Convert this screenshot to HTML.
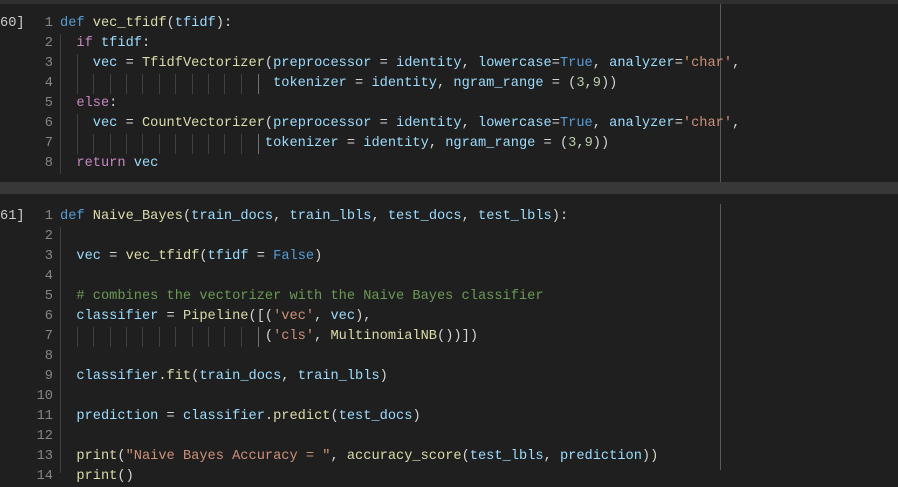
<!DOCTYPE html>
<html><head><meta charset="utf-8"><style>
html,body{margin:0;padding:0}
body{width:898px;height:470px;background:#1f1f1f;position:relative;overflow:hidden;font-family:"Liberation Mono",monospace;font-size:13.67px;color:#d4d4d4}
.w{position:absolute;left:0;top:3px;width:898px;height:470px}
.l{position:absolute;left:60px;height:20px;line-height:20px;white-space:pre}
.n{position:absolute;left:20px;width:33px;text-align:right;height:20px;line-height:20px;color:#858585}
.lab{position:absolute;left:0;height:20px;line-height:20px;color:#cccccc}
.g{position:absolute;width:1px;background:#404040}
.k{color:#569cd6}.f{color:#dcdcaa}.p{color:#9cdcfe}.c{color:#c586c0}.s{color:#ce9178}.m{color:#6a9955}.d{color:#b5cea8}.y{color:#d4d4d4}.v{color:#d4d4d4}
</style></head><body>
<div style="position:absolute;left:0;top:0;width:898px;height:4px;background:#2f2f2f"></div>
<div style="position:absolute;left:0;top:182px;width:898px;height:12px;background:#383838"></div>
<div style="position:absolute;left:720px;top:4px;width:1px;height:178px;background:#5a5a5a"></div>
<div style="position:absolute;left:720px;top:204px;width:1px;height:266px;background:#5a5a5a"></div>
<div class="w">
<!-- cell 1 -->
<div class="lab" style="top:11px">60]</div>
<div class="g" style="left:60px;top:31px;height:140px"></div>
<div class="g" style="left:77px;top:51px;height:40px"></div>
<div class="g" style="left:77px;top:111px;height:40px"></div>
<div class="g" style="left:93px;top:71px;height:20px"></div><div class="g" style="left:110px;top:71px;height:20px"></div><div class="g" style="left:126px;top:71px;height:20px"></div><div class="g" style="left:142px;top:71px;height:20px"></div><div class="g" style="left:159px;top:71px;height:20px"></div><div class="g" style="left:175px;top:71px;height:20px"></div><div class="g" style="left:192px;top:71px;height:20px"></div><div class="g" style="left:208px;top:71px;height:20px"></div><div class="g" style="left:224px;top:71px;height:20px"></div><div class="g" style="left:241px;top:71px;height:20px"></div><div class="g" style="left:258px;top:71px;height:20px;background:#707070"></div>
<div class="g" style="left:93px;top:131px;height:20px"></div><div class="g" style="left:110px;top:131px;height:20px"></div><div class="g" style="left:126px;top:131px;height:20px"></div><div class="g" style="left:142px;top:131px;height:20px"></div><div class="g" style="left:159px;top:131px;height:20px"></div><div class="g" style="left:175px;top:131px;height:20px"></div><div class="g" style="left:192px;top:131px;height:20px"></div><div class="g" style="left:208px;top:131px;height:20px"></div><div class="g" style="left:224px;top:131px;height:20px"></div><div class="g" style="left:241px;top:131px;height:20px"></div><div class="g" style="left:258px;top:131px;height:20px;background:#707070"></div>

<div class="n" style="top:11px">1</div><div class="l" style="top:11px"><span class="k">def</span> <span class="f">vec_tfidf</span><span class="y">(</span><span class="p">tfidf</span><span class="y">)</span>:</div>
<div class="n" style="top:31px">2</div><div class="l" style="top:31px">  <span class="c">if</span> <span class="p">tfidf</span>:</div>
<div class="n" style="top:51px">3</div><div class="l" style="top:51px">    <span class="p">vec</span> = <span class="f">TfidfVectorizer</span><span class="y">(</span><span class="p">preprocessor</span> = <span class="p">identity</span>, <span class="p">lowercase</span>=<span class="k">True</span>, <span class="p">analyzer</span>=<span class="s">'char'</span>,</div>
<div class="n" style="top:71px">4</div><div class="l" style="top:71px">                          <span class="p">tokenizer</span> = <span class="p">identity</span>, <span class="p">ngram_range</span> = <span class="v">(</span><span class="d">3</span>,<span class="d">9</span><span class="v">)</span><span class="y">)</span></div>
<div class="n" style="top:91px">5</div><div class="l" style="top:91px">  <span class="c">else</span>:</div>
<div class="n" style="top:111px">6</div><div class="l" style="top:111px">    <span class="p">vec</span> = <span class="f">CountVectorizer</span><span class="y">(</span><span class="p">preprocessor</span> = <span class="p">identity</span>, <span class="p">lowercase</span>=<span class="k">True</span>, <span class="p">analyzer</span>=<span class="s">'char'</span>,</div>
<div class="n" style="top:131px">7</div><div class="l" style="top:131px">                         <span class="p">tokenizer</span> = <span class="p">identity</span>, <span class="p">ngram_range</span> = <span class="v">(</span><span class="d">3</span>,<span class="d">9</span><span class="v">)</span><span class="y">)</span></div>
<div class="n" style="top:151px">8</div><div class="l" style="top:151px">  <span class="c">return</span> <span class="p">vec</span></div>

<!-- cell 2 -->
<div class="lab" style="top:204px">61]</div>
<div class="g" style="left:60px;top:224px;height:246px"></div>
<div class="g" style="left:77px;top:324px;height:20px"></div><div class="g" style="left:93px;top:324px;height:20px"></div><div class="g" style="left:110px;top:324px;height:20px"></div><div class="g" style="left:126px;top:324px;height:20px"></div><div class="g" style="left:142px;top:324px;height:20px"></div><div class="g" style="left:159px;top:324px;height:20px"></div><div class="g" style="left:175px;top:324px;height:20px"></div><div class="g" style="left:192px;top:324px;height:20px"></div><div class="g" style="left:208px;top:324px;height:20px"></div><div class="g" style="left:224px;top:324px;height:20px"></div><div class="g" style="left:241px;top:324px;height:20px"></div><div class="g" style="left:258px;top:324px;height:20px;background:#707070"></div>

<div class="n" style="top:204px">1</div><div class="l" style="top:204px"><span class="k">def</span> <span class="f">Naive_Bayes</span><span class="y">(</span><span class="p">train_docs</span>, <span class="p">train_lbls</span>, <span class="p">test_docs</span>, <span class="p">test_lbls</span><span class="y">)</span>:</div>
<div class="n" style="top:224px">2</div>
<div class="n" style="top:244px">3</div><div class="l" style="top:244px">  <span class="p">vec</span> = <span class="f">vec_tfidf</span><span class="y">(</span><span class="p">tfidf</span> = <span class="k">False</span><span class="y">)</span></div>
<div class="n" style="top:264px">4</div>
<div class="n" style="top:284px">5</div><div class="l" style="top:284px">  <span class="m"># combines the vectorizer with the Naive Bayes classifier</span></div>
<div class="n" style="top:304px">6</div><div class="l" style="top:304px">  <span class="p">classifier</span> = <span class="f">Pipeline</span><span class="y">(</span><span class="v">[</span><span class="y">(</span><span class="s">'vec'</span>, <span class="p">vec</span><span class="y">)</span>,</div>
<div class="n" style="top:324px">7</div><div class="l" style="top:324px">                         <span class="y">(</span><span class="s">'cls'</span>, <span class="f">MultinomialNB</span><span class="y">()</span><span class="y">)</span><span class="v">]</span><span class="y">)</span></div>
<div class="n" style="top:344px">8</div>
<div class="n" style="top:364px">9</div><div class="l" style="top:364px">  <span class="p">classifier</span>.<span class="f">fit</span><span class="y">(</span><span class="p">train_docs</span>, <span class="p">train_lbls</span><span class="y">)</span></div>
<div class="n" style="top:384px">10</div>
<div class="n" style="top:404px">11</div><div class="l" style="top:404px">  <span class="p">prediction</span> = <span class="p">classifier</span>.<span class="f">predict</span><span class="y">(</span><span class="p">test_docs</span><span class="y">)</span></div>
<div class="n" style="top:424px">12</div>
<div class="n" style="top:444px">13</div><div class="l" style="top:444px">  <span class="f">print</span><span class="y">(</span><span class="s">"Naive Bayes Accuracy = "</span>, <span class="f">accuracy_score</span><span class="v">(</span><span class="p">test_lbls</span>, <span class="p">prediction</span><span class="v">)</span><span class="y">)</span></div>
<div class="n" style="top:464px">14</div><div class="l" style="top:464px">  <span class="f">print</span><span class="y">()</span></div>
</div>
</body></html>
